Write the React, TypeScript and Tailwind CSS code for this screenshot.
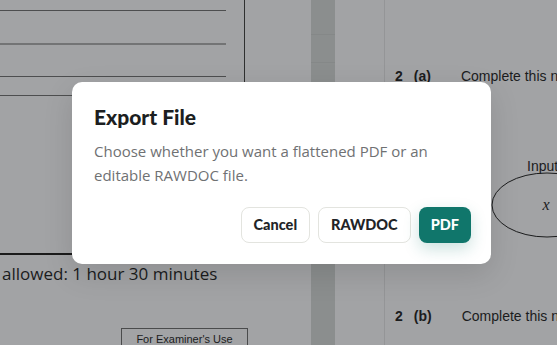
import React from "react";

function ExportDialog() {
  return (
    <div className="absolute left-[72px] top-[82px] w-[419px] rounded-[10px] bg-white pl-[22px] pr-5 pt-[21px] pb-[21px] shadow-[0_10px_30px_rgba(0,0,0,0.12)]">
      <h2 className="font-['Lato',sans-serif] text-[21px] leading-[28px] font-black text-[#1c1e21]">
        Export File
      </h2>
      <p className="mt-2 font-['Open_Sans',sans-serif] text-[15px] leading-[24px] text-[#6f7173]">
        Choose whether you want a flattened PDF or an editable RAWDOC file.
      </p>
      <div className="mt-5 flex justify-end gap-2">
        <button className="h-9 rounded-lg border border-[#e3e4df] bg-white px-[12px] font-['Lato',sans-serif] text-[14.5px] font-black text-[#222427]">
          Cancel
        </button>
        <button className="h-9 rounded-lg border border-[#e3e4df] bg-white px-[12px] font-['Lato',sans-serif] text-[14.5px] font-black text-[#222427]">
          RAWDOC
        </button>
        <button className="h-9 rounded-lg bg-[#10766b] px-[12px] font-['Lato',sans-serif] text-[14.5px] font-black text-white shadow-[0_6px_16px_rgba(16,118,107,0.22)]">
          PDF
        </button>
      </div>
    </div>
  );
}

export default function App() {
  return (
    <div className="relative flex h-[345px] w-[557px] overflow-hidden bg-[#a2a3a5]">
      {/* Left exam page */}
      <div className="flex w-[245px] shrink-0 flex-col">
        <div className="h-[255px] shrink-0 border-r border-b-2 border-r-[#2f3030] border-b-[#1b1b1b]">
          <div className="mt-[10px] h-px w-[226px] bg-[#4d4e4f]" />
          <div className="mt-[32px] h-[2px] w-[226px] bg-[#737475]" />
          <div className="mt-[31px] h-px w-[226px] bg-[#4d4e4f]" />
          <div className="mt-[18px] h-px w-[226px] bg-[#4d4e4f]" />
        </div>
        <div className="mt-[6px] shrink-0 whitespace-nowrap pl-[2px] font-['Open_Sans',sans-serif] text-[17px] leading-[26px] text-[#1b1c1d]">
          allowed: 1 hour 30 minutes
        </div>
        <div className="ml-[121px] mt-[41px] h-[30px] w-[127px] shrink-0 border border-[#4a4b4c] pt-[3px] text-center font-['Liberation_Sans',sans-serif] text-[11px] leading-[14px] text-[#1b1c1d]">
          For Examiner's Use
        </div>
      </div>

      {/* Gap between pages */}
      <div className="w-[66px] shrink-0" />
      <div className="flex w-[24px] shrink-0 flex-col bg-[#8b8e8e]">
        <div className="mt-[34px] h-px bg-[#858888]" />
        <div className="mt-[27px] h-px bg-[#858888]" />
      </div>

      {/* Right exam page */}
      <div className="w-[50px] shrink-0 border-r border-r-[#949597]" />
      <div className="relative flex-1 font-['Liberation_Sans',sans-serif] text-[14px] text-[#1b1c1d]">
        <div className="mt-[67px] flex whitespace-nowrap leading-[18px]">
          <span className="ml-[10px] font-bold">2</span>
          <span className="ml-[11px] font-bold">(a)</span>
          <span className="ml-[30px]">Complete this n</span>
        </div>
        <div className="ml-[142px] mt-[72px] leading-[18px]">Input</div>
        <svg className="absolute left-[105px] top-[170px]" width="80" height="70" viewBox="0 0 80 70">
          <ellipse cx="57" cy="35" rx="55" ry="32" fill="none" stroke="#1b1c1d" strokeWidth="1" />
          <text x="56" y="40" fontFamily="Liberation Serif, serif" fontStyle="italic" fontSize="16" fill="#1b1c1d" textAnchor="middle">
            x
          </text>
        </svg>
        <div className="absolute left-0 top-[307px] flex whitespace-nowrap leading-[18px]">
          <span className="ml-[10px] font-bold">2</span>
          <span className="ml-[11px] font-bold">(b)</span>
          <span className="ml-[30px]">Complete this n</span>
        </div>
      </div>

      <ExportDialog />
    </div>
  );
}
